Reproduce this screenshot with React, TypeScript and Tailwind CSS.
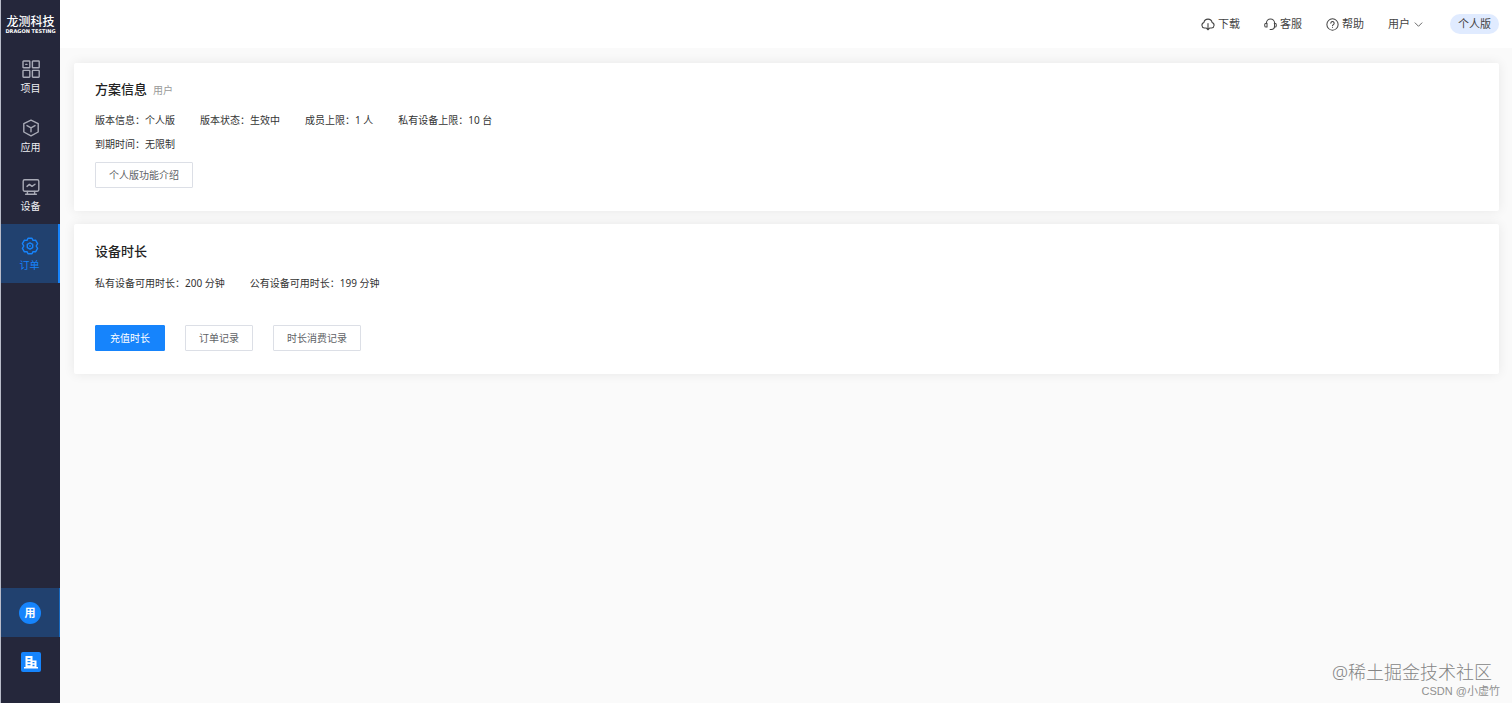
import type { ReactNode } from 'react';

type SvgProps = { className?: string; children: ReactNode };

function Line({ className = 'size-[18px]', children }: SvgProps) {
  return (
    <svg
      viewBox="0 0 18 18"
      className={className}
      fill="none"
      stroke="currentColor"
      strokeWidth="1.4"
      strokeLinecap="round"
      strokeLinejoin="round"
      aria-hidden="true"
    >
      {children}
    </svg>
  );
}

const projectIcon = (
  <Line>
    <rect x="1" y="1" width="6.8" height="6.8" rx="0.6" />
    <rect x="10.4" y="1" width="6.8" height="6.8" rx="0.6" />
    <rect x="1" y="10.4" width="6.8" height="6.8" rx="0.6" />
    <rect x="10.4" y="10.4" width="6.8" height="6.8" rx="0.6" />
    <path d="M3.8 4.4h1.2" />
  </Line>
);

const appIcon = (
  <Line>
    <path d="M9 1.2 16.2 4.6V13L9 16.8 1.8 13V4.6Z" />
    <path d="M5 6.6 9 8.8l4-2.2M9 8.8v4" />
  </Line>
);

const deviceIcon = (
  <Line>
    <rect x="1.2" y="1.8" width="15.6" height="11.4" rx="1.4" />
    <path d="m5 8.4 2.4-2 2.6 2 3-2.2M5.4 13.4v2.4M12.6 13.4v2.4M3.6 16.2h10.8" />
  </Line>
);

const orderIcon = (
  <Line>
    <path d="M7 1.2h4l1 2.2 2.6-.2 2 3.4L15.2 9l1.4 2.4-2 3.4-2.6-.2-1 2.2H7l-1-2.2-2.6.2-2-3.4L2.8 9 1.4 6.6l2-3.4 2.6.2Z" />
    <path d="m9 5.9 2.7 1.5v3.2L9 12.1l-2.7-1.5V7.4Z" />
    <path d="M9 8.7v.6" />
  </Line>
);

const downloadIcon = (
  <Line className="size-[14px]">
    <path d="M6 14.2H4.4A3.7 3.7 0 0 1 3.8 7a5.3 5.3 0 0 1 10.4 0 3.7 3.7 0 0 1-.6 7.2H12" />
    <path d="M9 8.4v7.8M7 14.4l2 2 2-2" />
  </Line>
);

const serviceIcon = (
  <Line className="size-[13px]">
    <path d="M3.4 7.4V7a5.6 5.6 0 0 1 11.2 0v4.8c0 2.4-1.6 4-4.6 4" />
    <path d="M4.2 7.2H3a2 2 0 0 0-2 2v1.4a2 2 0 0 0 2 2h1.2ZM14.2 7.2H15a2 2 0 0 1 2 2v1.4a2 2 0 0 1-2 2h-.8" />
    <path d="M8.4 15.8h1.8" />
  </Line>
);

const helpIcon = (
  <Line className="size-[13px]">
    <circle cx="9" cy="9" r="7.8" />
    <path d="M6.7 7.2a2.3 2.3 0 1 1 3.5 2c-.8.5-1.2.8-1.2 1.6M9 13.2v.1" />
  </Line>
);

const navItems = [
  { label: '项目', icon: projectIcon, active: false },
  { label: '应用', icon: appIcon, active: false },
  { label: '设备', icon: deviceIcon, active: false },
  { label: '订单', icon: orderIcon, active: true },
];

const headerLinks = [
  { label: '下载', icon: downloadIcon },
  { label: '客服', icon: serviceIcon },
  { label: '帮助', icon: helpIcon },
];

function Sidebar() {
  return (
    <aside className="flex w-[60px] shrink-0 flex-col border-l border-[#b9bcc9] bg-[#25273b] pb-4">
      <a href="#" className="flex h-[47px] flex-col items-center pt-4 text-white">
        <span className="text-[12px] leading-[12px] font-medium">龙测科技</span>
        <span className="font-['DejaVu_Sans'] text-[5px] leading-[6px] font-bold whitespace-nowrap">
          DRAGON TESTING
        </span>
      </a>
      <nav className="flex flex-col">
        {navItems.map((item) => (
          <a
            key={item.label}
            href="#"
            aria-current={item.active ? 'page' : undefined}
            className={
              item.active
                ? 'flex h-[59px] flex-col items-center gap-1 border-r-2 border-[#1684fc] bg-[#21416f] pt-[13px] text-[#1684fc]'
                : 'flex h-[59px] flex-col items-center gap-1 pt-[13px] text-[#a9abb7]'
            }
          >
            {item.icon}
            <span className={item.active ? 'text-[10px] leading-3' : 'text-[10px] leading-3 text-[#eeeef2]'}>
              {item.label}
            </span>
          </a>
        ))}
      </nav>
      <div className="mt-auto flex flex-col">
        <button type="button" className="flex h-[49px] items-center justify-center border-r border-[#1768bd] bg-[#21416f]">
          <span className="flex size-[22px] items-center justify-center rounded-full bg-[#1684fc] text-[11px] leading-none font-bold text-white">
            用
          </span>
        </button>
        <button type="button" aria-label="企业" className="flex h-[50px] items-center justify-center">
          <span className="flex size-5 items-center justify-center rounded-xs bg-[#1684fc]">
            <svg viewBox="0 0 14 14" className="size-[14px]" aria-hidden="true">
              <path
                fill="#fff"
                fillRule="evenodd"
                d="M1.5 1h7v4.5h4V12H14v1.5H0V12h1.5ZM3.5 3v1.3h3V3ZM3.5 6v1.3h3V6ZM3.5 9v1.3h3V9ZM8.5 7v1.2h2V7ZM8.5 9.8v1.4h2V9.8Z"
              />
            </svg>
          </span>
        </button>
      </div>
    </aside>
  );
}

function Header() {
  return (
    <header className="flex h-12 items-center justify-end bg-white pr-[13px] text-[11px] leading-4 text-[#444]">
      <nav className="flex items-center gap-6">
        {headerLinks.map((link) => (
          <a key={link.label} href="#" className="flex items-center gap-[3px]">
            {link.icon}
            {link.label}
          </a>
        ))}
        <button type="button" className="flex items-center gap-1">
          用户
          <svg viewBox="0 0 9 9" className="size-[9px]" fill="none" stroke="currentColor" strokeWidth="0.8" aria-hidden="true">
            <path d="m.8 2.6 3.7 3.7 3.7-3.7" />
          </svg>
        </button>
      </nav>
      <span className="ml-[27px] rounded-full bg-[#e0ebff] px-2 py-0.5">个人版</span>
    </header>
  );
}

function Card({ children }: { children: ReactNode }) {
  return (
    <section className="rounded-xs bg-white px-[21px] pt-[17px] pb-[23px] shadow-[0_0_12px_rgba(0,0,0,0.08)]">
      {children}
    </section>
  );
}

function Field({ label, value }: { label: string; value: string }) {
  return (
    <div className="flex">
      <dt>{label}：</dt>
      <dd>{value}</dd>
    </div>
  );
}

function Button({ children, primary = false }: { children: ReactNode; primary?: boolean }) {
  return (
    <button
      type="button"
      className={
        primary
          ? 'h-[26px] rounded-[1px] border border-[#1684fc] bg-[#1684fc] px-[14px] text-[10px] text-white'
          : 'h-[26px] rounded-[1px] border border-[#dcdfe6] bg-white px-[13px] text-[10px] text-[#606266]'
      }
    >
      {children}
    </button>
  );
}

export default function App() {
  return (
    <div
      lang="zh-CN"
      className="relative flex min-h-screen bg-[#fafafa] font-['Noto_Sans','Noto_Sans_CJK_SC',sans-serif] text-[#333]"
    >
      <Sidebar />
      <div className="flex min-w-0 flex-1 flex-col">
        <Header />
        <main className="flex flex-col gap-[13px] py-[15px] pr-[13px] pl-[14px]">
          <Card>
            <div className="flex h-[18px] items-baseline gap-1.5 leading-[18px]">
              <h2 className="text-[13px] font-medium text-[#222]">方案信息</h2>
              <span className="text-[10px] text-[#999]">用户</span>
            </div>
            <dl className="mt-[10px] flex flex-wrap gap-x-[25px] text-[10px] leading-6">
              <Field label="版本信息" value="个人版" />
              <Field label="版本状态" value="生效中" />
              <Field label="成员上限" value="1 人" />
              <Field label="私有设备上限" value="10 台" />
              <div className="basis-full">
                <Field label="到期时间" value="无限制" />
              </div>
            </dl>
            <div className="mt-1.5 flex">
              <Button>个人版功能介绍</Button>
            </div>
          </Card>
          <Card>
            <h2 className="text-[13px] leading-5 font-medium text-[#222]">设备时长</h2>
            <dl className="mt-[10px] flex flex-wrap gap-x-[25px] text-[10px] leading-6">
              <Field label="私有设备可用时长" value="200 分钟" />
              <Field label="公有设备可用时长" value="199 分钟" />
            </dl>
            <div className="mt-[30px] flex gap-5">
              <Button primary>充值时长</Button>
              <Button>订单记录</Button>
              <Button>时长消费记录</Button>
            </div>
          </Card>
        </main>
      </div>
      <div className="pointer-events-none absolute right-3 bottom-[5px] flex flex-col items-end">
        <span className="mr-2 text-[18px] leading-6 font-light text-[#858585]">@稀土掘金技术社区</span>
        <span className="font-['Liberation_Sans','Noto_Sans_CJK_SC',sans-serif] text-[11px] leading-[14px] text-[#909090]">
          CSDN @小虚竹
        </span>
      </div>
    </div>
  );
}
